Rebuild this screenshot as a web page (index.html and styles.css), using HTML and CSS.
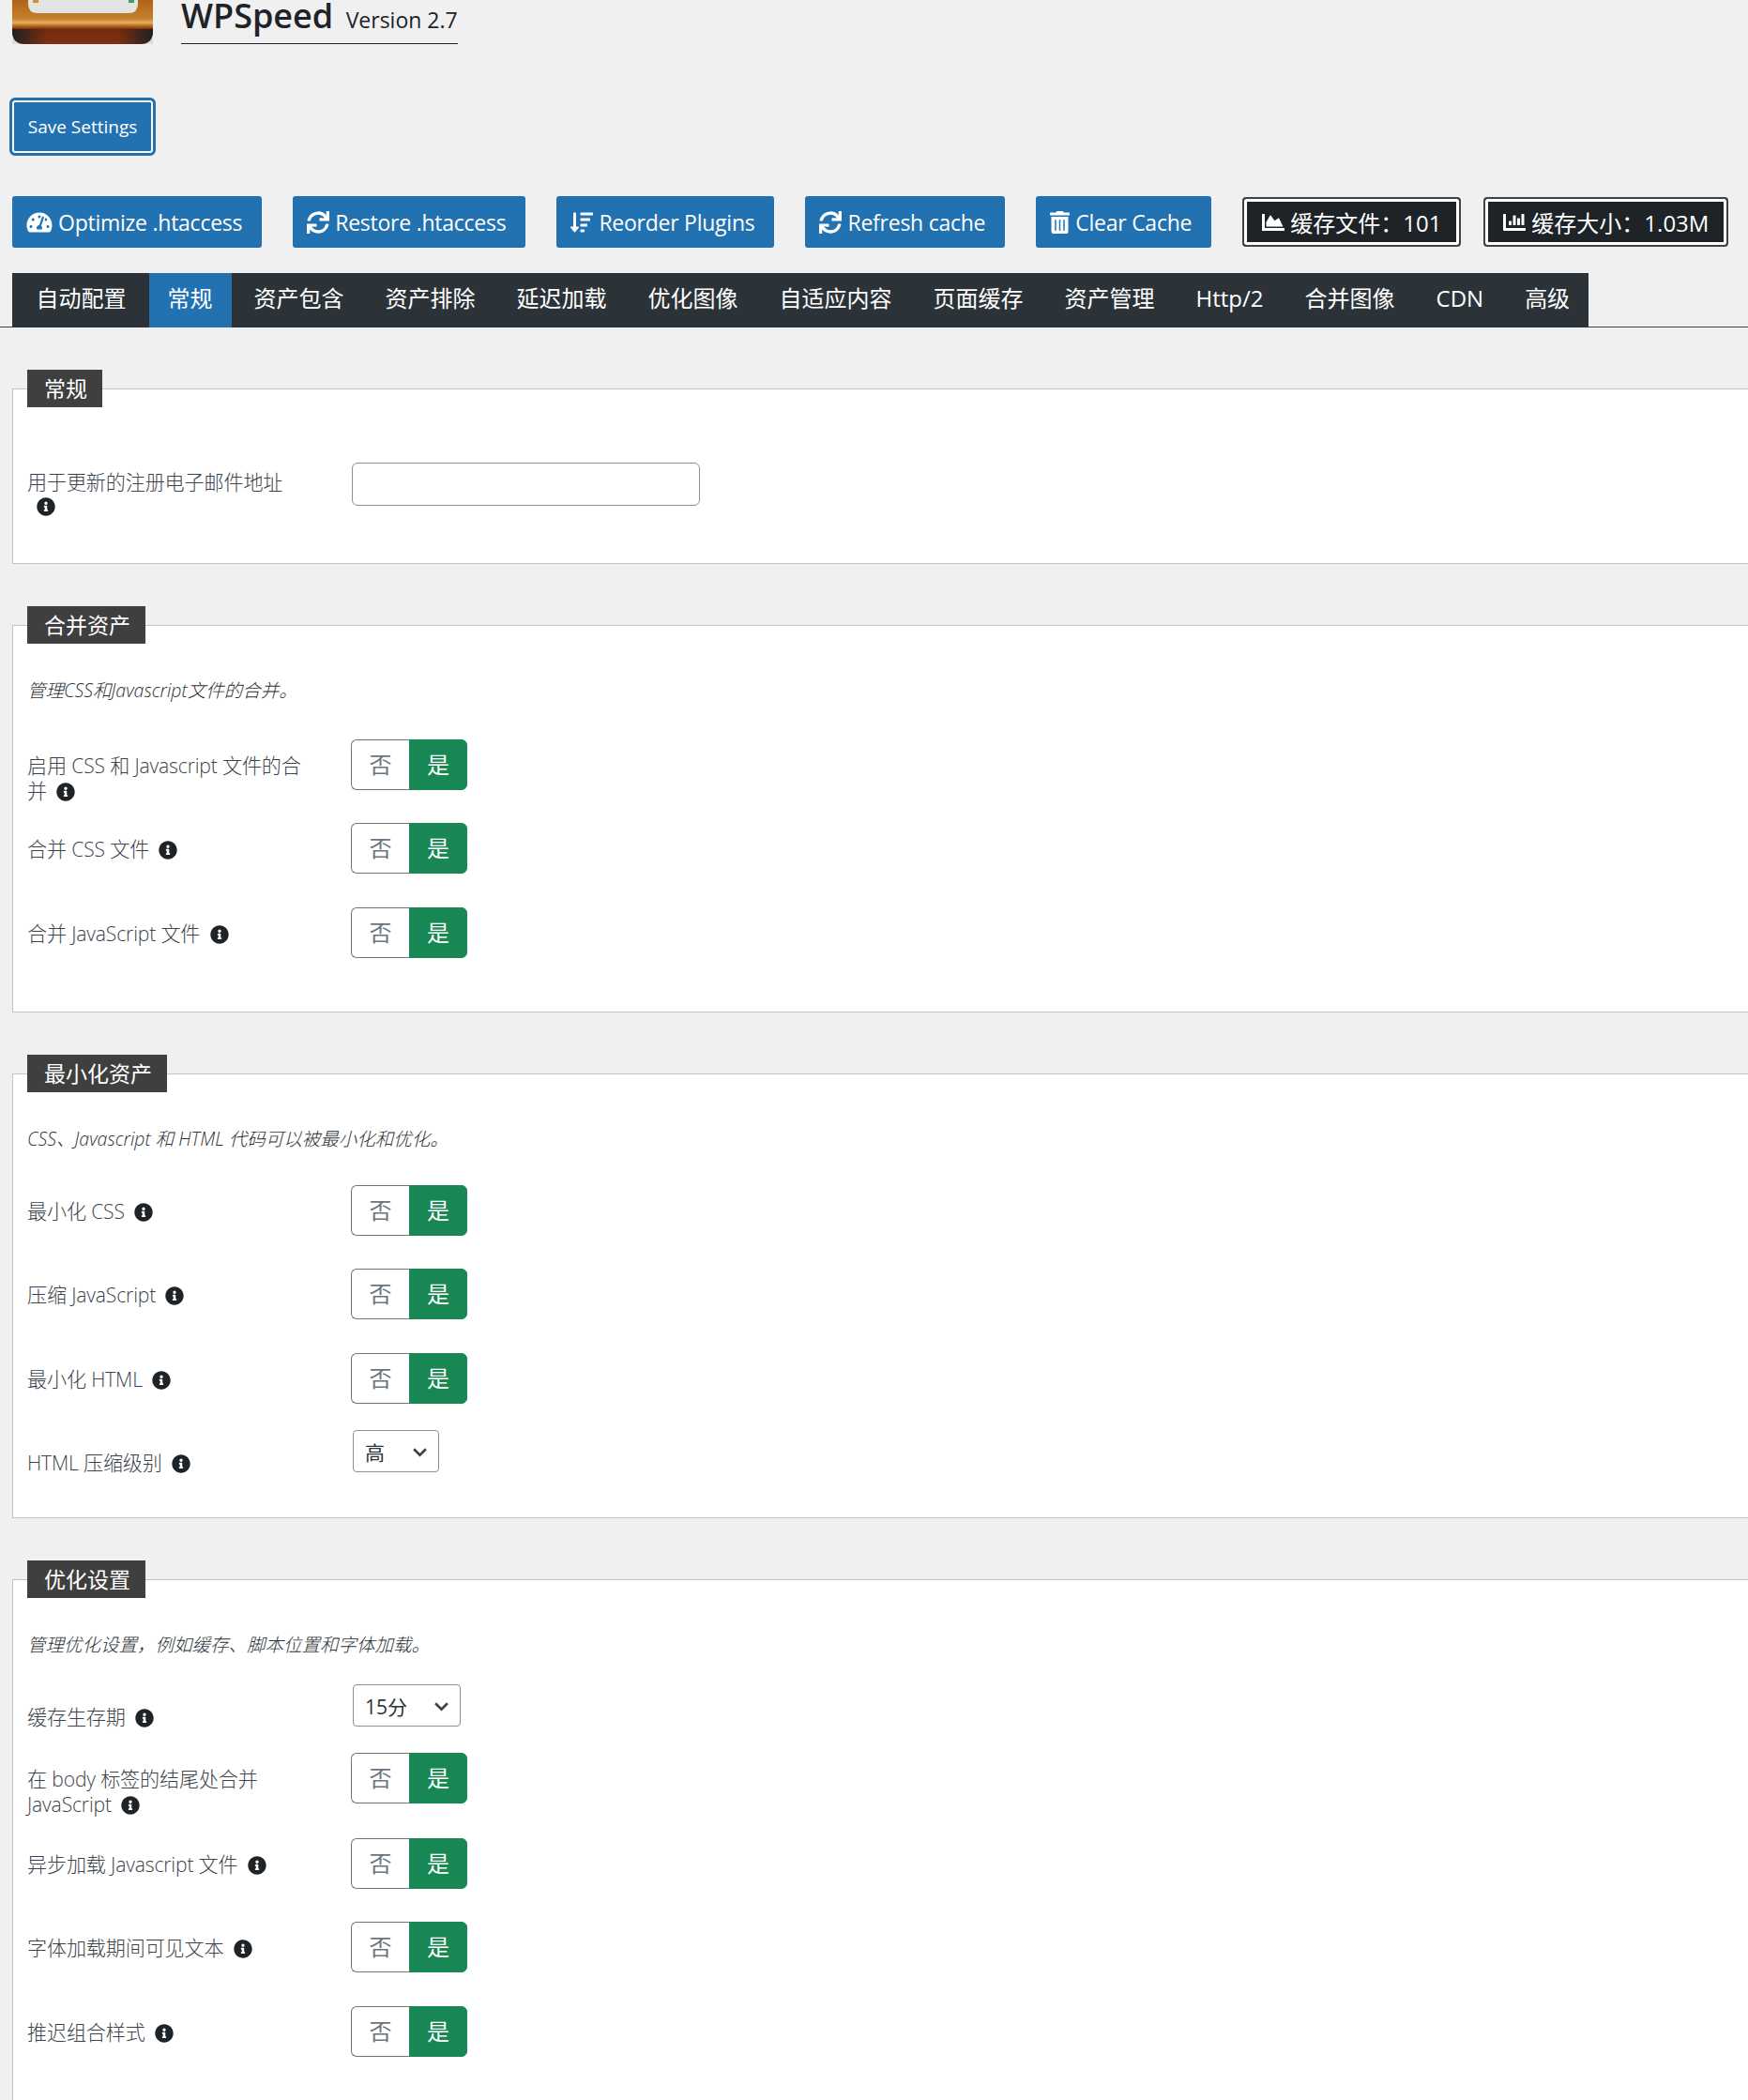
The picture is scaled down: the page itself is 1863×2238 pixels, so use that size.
FILE: index.html
```html
<!DOCTYPE html>
<html lang="zh-CN">
  <head>
    <meta charset="UTF-8" />
    <title>WPSpeed</title>
    <link rel="stylesheet" href="styles.css">
  </head>
  <body>
    <!-- Icon set -->
    <svg class="icon-defs" xmlns="http://www.w3.org/2000/svg">
      <symbol id="i-gauge" viewBox="0 0 576 512"><path d="M288 32C128.94 32 0 160.94 0 320c0 52.8 14.25 102.26 39.06 144.8 5.61 9.62 16.3 15.2 27.44 15.2h443c11.14 0 21.83-5.58 27.44-15.2C561.75 422.26 576 372.8 576 320c0-159.06-128.94-288-288-288zm0 64c14.71 0 26.58 10.13 30.32 23.65-1.11 2.26-2.64 4.23-3.45 6.67l-9.22 27.67c-5.13 3.49-10.97 6.01-17.64 6.01-17.67 0-32-14.33-32-32S270.33 96 288 96zM96 384c-17.67 0-32-14.33-32-32s14.33-32 32-32 32 14.33 32 32-14.33 32-32 32zm48-160c-17.67 0-32-14.33-32-32s14.33-32 32-32 32 14.33 32 32-14.33 32-32 32zm246.77-72.41l-61.33 184C343.13 347.33 352 364.54 352 384c0 11.72-3.38 22.55-8.88 32H232.88c-5.5-9.45-8.88-20.28-8.88-32 0-33.94 26.5-61.43 59.9-63.59l61.34-184.01c4.17-12.56 17.73-19.45 30.36-15.17 12.57 4.19 19.35 17.79 15.17 30.36zm14.66 57.2l15.52-46.55c3.47-1.29 7.13-2.23 11.05-2.23 17.67 0 32 14.33 32 32s-14.33 32-32 32c-11.38-.01-20.89-6.28-26.57-15.22zM480 384c-17.67 0-32-14.33-32-32s14.33-32 32-32 32 14.33 32 32-14.33 32-32 32z"/></symbol>
      <symbol id="i-sync" viewBox="0 0 512 512"><path d="M440.65 12.57l4 82.77A247.16 247.16 0 0 0 255.83 8C134.73 8 33.91 94.92 12.29 209.82A12 12 0 0 0 24.09 224h49.05a12 12 0 0 0 11.67-9.26 175.91 175.91 0 0 1 317-56.94l-101.46-4.86a12 12 0 0 0-12.57 12v47.41a12 12 0 0 0 12 12H500a12 12 0 0 0 12-12V12a12 12 0 0 0-12-12h-47.37a12 12 0 0 0-11.98 12.57zM255.83 432a175.61 175.61 0 0 1-146-77.8l101.8 4.87a12 12 0 0 0 12.57-12v-47.4a12 12 0 0 0-12-12H12a12 12 0 0 0-12 12V500a12 12 0 0 0 12 12h47.35a12 12 0 0 0 12-12.6l-4.15-82.57A247.17 247.17 0 0 0 255.83 504c121.11 0 221.93-86.92 243.55-201.82a12 12 0 0 0-11.8-14.18h-49.05a12 12 0 0 0-11.67 9.26A175.86 175.86 0 0 1 255.83 432z"/></symbol>
      <symbol id="i-sort" viewBox="0 0 512 512"><path d="M304 416h-64a16 16 0 0 0-16 16v32a16 16 0 0 0 16 16h64a16 16 0 0 0 16-16v-32a16 16 0 0 0-16-16zm-128-64h-48V48a16 16 0 0 0-16-16H80a16 16 0 0 0-16 16v304H16c-14.19 0-21.37 17.24-11.29 27.31l80 96a16 16 0 0 0 22.62 0l80-96C197.35 369.26 190.22 352 176 352zm256-192H240a16 16 0 0 0-16 16v32a16 16 0 0 0 16 16h192a16 16 0 0 0 16-16v-32a16 16 0 0 0-16-16zm-64 128H240a16 16 0 0 0-16 16v32a16 16 0 0 0 16 16h128a16 16 0 0 0 16-16v-32a16 16 0 0 0-16-16zM496 32H240a16 16 0 0 0-16 16v32a16 16 0 0 0 16 16h256a16 16 0 0 0 16-16V48a16 16 0 0 0-16-16z"/></symbol>
      <symbol id="i-trash" viewBox="0 0 448 512"><path d="M32 464a48 48 0 0 0 48 48h288a48 48 0 0 0 48-48V128H32zm272-256a16 16 0 0 1 32 0v224a16 16 0 0 1-32 0zm-96 0a16 16 0 0 1 32 0v224a16 16 0 0 1-32 0zm-96 0a16 16 0 0 1 32 0v224a16 16 0 0 1-32 0zM432 32H312l-9.4-18.7A24 24 0 0 0 281.1 0H166.8a23.72 23.72 0 0 0-21.4 13.3L136 32H16A16 16 0 0 0 0 48v32a16 16 0 0 0 16 16h416a16 16 0 0 0 16-16V48a16 16 0 0 0-16-16z"/></symbol>
      <symbol id="i-area" viewBox="0 0 512 512"><path d="M500 384c6.6 0 12 5.4 12 12v40c0 6.6-5.4 12-12 12H12c-6.6 0-12-5.4-12-12V76c0-6.6 5.4-12 12-12h40c6.6 0 12 5.4 12 12v308h436zM372.7 159.5L288 216l-85.3-113.7c-5.1-6.8-15.5-6.3-19.9 1L96 248v104h384l-89.9-187.8c-3.2-6.5-11.4-8.7-17.4-4.7z"/></symbol>
      <symbol id="i-bar" viewBox="0 0 512 512"><path d="M332.8 320h38.4c6.4 0 12.8-6.4 12.8-12.8V172.8c0-6.4-6.4-12.8-12.8-12.8h-38.4c-6.4 0-12.8 6.4-12.8 12.8v134.4c0 6.4 6.4 12.8 12.8 12.8zm96 0h38.4c6.4 0 12.8-6.4 12.8-12.8V76.8c0-6.4-6.4-12.8-12.8-12.8h-38.4c-6.4 0-12.8 6.4-12.8 12.8v230.4c0 6.4 6.4 12.8 12.8 12.8zm-288 0h38.4c6.4 0 12.8-6.4 12.8-12.8v-70.4c0-6.4-6.4-12.8-12.8-12.8h-38.4c-6.4 0-12.8 6.4-12.8 12.8v70.4c0 6.4 6.4 12.8 12.8 12.8zm96 0h38.4c6.4 0 12.8-6.4 12.8-12.8V108.8c0-6.4-6.4-12.8-12.8-12.8h-38.4c-6.4 0-12.8 6.4-12.8 12.8v198.4c0 6.4 6.4 12.8 12.8 12.8zM496 384H64V80c0-8.84-7.16-16-16-16H16C7.16 64 0 71.16 0 80v336c0 17.67 14.33 32 32 32h464c8.84 0 16-7.16 16-16v-32c0-8.84-7.16-16-16-16z"/></symbol>
      <symbol id="i-info" viewBox="0 0 512 512"><path d="M256 8C119.043 8 8 119.083 8 256c0 136.997 111.043 248 248 248s248-111.003 248-248C504 119.083 392.957 8 256 8zm0 110c23.196 0 42 18.804 42 42s-18.804 42-42 42-42-18.804-42-42 18.804-42 42-42zm56 254c0 6.627-5.373 12-12 12h-88c-6.627 0-12-5.373-12-12v-24c0-6.627 5.373-12 12-12h12v-64h-12c-6.627 0-12-5.373-12-12v-24c0-6.627 5.373-12 12-12h64c6.627 0 12 5.373 12 12v100h12c6.627 0 12 5.373 12 12v24z"/></symbol>
    </svg>

    <!-- Header -->
    <div class="header">
      <svg class="logo" viewBox="0 0 150 47" xmlns="http://www.w3.org/2000/svg">
        <defs>
          <linearGradient id="wood" x1="0" y1="0" x2="0" y2="1">
            <stop offset="0" stop-color="#9a5518" />
            <stop offset="0.32" stop-color="#b9701f" />
            <stop offset="0.52" stop-color="#c4802e" />
            <stop offset="0.6" stop-color="#e8ad5e" />
            <stop offset="0.66" stop-color="#b4691f" />
            <stop offset="0.72" stop-color="#7c2c0c" />
            <stop offset="1" stop-color="#8a3410" />
          </linearGradient>
          <linearGradient id="shade" x1="0" y1="0" x2="1" y2="0">
            <stop offset="0" stop-color="#1f2024" />
            <stop offset="0.25" stop-color="#1f2024" stop-opacity="0.1" />
            <stop offset="0.75" stop-color="#1f2024" stop-opacity="0.1" />
            <stop offset="1" stop-color="#1f2024" />
          </linearGradient>
        </defs>
        <rect x="0" y="0" width="150" height="47" fill="#dcdcdc" />
        <path d="M0 -10H150V33Q150 47 136 47H14Q0 47 0 33Z" fill="url(#wood)" />
        <path d="M0 31H150V33Q150 47 136 47H14Q0 47 0 33Z" fill="url(#shade)" />
        <path d="M17 -10H134V4Q134 14 124 14H27Q17 14 17 4Z" fill="#e3e5e3" />
        <rect x="22" y="0" width="6" height="3" fill="#d98a3a" />
        <rect x="124" y="0" width="6" height="3" fill="#3f9a78" />
      </svg>
      <h1 class="title">WPSpeed <small>Version 2.7</small></h1>
    </div>

    <div class="save-row">
      <button class="save-btn" type="button">Save Settings</button>
    </div>

    <!-- Action buttons -->
    <div class="actions">
      <a class="btn"><svg class="ico ico-wide"><use href="#i-gauge" /></svg>Optimize .htaccess</a>
      <a class="btn"><svg class="ico"><use href="#i-sync" /></svg>Restore .htaccess</a>
      <a class="btn"><svg class="ico"><use href="#i-sort" /></svg>Reorder Plugins</a>
      <a class="btn"><svg class="ico"><use href="#i-sync" /></svg>Refresh cache</a>
      <a class="btn"><svg class="ico ico-narrow"><use href="#i-trash" /></svg>Clear Cache</a>
      <span class="stat"><svg class="ico"><use href="#i-area" /></svg>缓存文件：101</span>
      <span class="stat stat-last"><svg class="ico"><use href="#i-bar" /></svg>缓存大小：1.03M</span>
    </div>

    <!-- Tabs -->
    <div class="tab-line">
      <ul class="tabs">
        <li class="tab">自动配置</li>
        <li class="tab active">常规</li>
        <li class="tab">资产包含</li>
        <li class="tab">资产排除</li>
        <li class="tab">延迟加载</li>
        <li class="tab">优化图像</li>
        <li class="tab">自适应内容</li>
        <li class="tab">页面缓存</li>
        <li class="tab">资产管理</li>
        <li class="tab">Http/2</li>
        <li class="tab">合并图像</li>
        <li class="tab">CDN</li>
        <li class="tab">高级</li>
      </ul>
    </div>

    <!-- General -->
    <fieldset class="panel panel-general">
      <legend>常规</legend>
      <div class="row row-input">
        <label class="row-label">用于更新的注册电子邮件地址 <svg class="info info-break"><use href="#i-info" /></svg></label>
        <input class="text-input" type="text" />
      </div>
    </fieldset>

    <!-- Combine -->
    <fieldset class="panel panel-combine">
      <legend>合并资产</legend>
      <p class="desc">管理CSS和Javascript文件的合并。</p>
      <div class="row">
        <label class="row-label">启用 CSS 和 Javascript 文件的合并 <svg class="info"><use href="#i-info" /></svg></label>
        <div class="toggle"><span class="off">否</span><span class="on">是</span></div>
      </div>
      <div class="row">
        <label class="row-label">合并 CSS 文件 <svg class="info"><use href="#i-info" /></svg></label>
        <div class="toggle"><span class="off">否</span><span class="on">是</span></div>
      </div>
      <div class="row">
        <label class="row-label">合并 JavaScript 文件 <svg class="info"><use href="#i-info" /></svg></label>
        <div class="toggle"><span class="off">否</span><span class="on">是</span></div>
      </div>
    </fieldset>

    <!-- Minify -->
    <fieldset class="panel panel-minify">
      <legend>最小化资产</legend>
      <p class="desc">CSS、Javascript 和 HTML 代码可以被最小化和优化。</p>
      <div class="row">
        <label class="row-label">最小化 CSS <svg class="info"><use href="#i-info" /></svg></label>
        <div class="toggle"><span class="off">否</span><span class="on">是</span></div>
      </div>
      <div class="row">
        <label class="row-label">压缩 JavaScript <svg class="info"><use href="#i-info" /></svg></label>
        <div class="toggle"><span class="off">否</span><span class="on">是</span></div>
      </div>
      <div class="row">
        <label class="row-label">最小化 HTML <svg class="info"><use href="#i-info" /></svg></label>
        <div class="toggle"><span class="off">否</span><span class="on">是</span></div>
      </div>
      <div class="row row-select">
        <label class="row-label">HTML 压缩级别 <svg class="info"><use href="#i-info" /></svg></label>
        <div class="select select-short">高<svg class="chev" viewBox="0 0 16 16"><path d="M2 5l6 6 6-6" /></svg></div>
      </div>
    </fieldset>

    <!-- Optimize -->
    <fieldset class="panel panel-optimize">
      <legend>优化设置</legend>
      <p class="desc">管理优化设置，例如缓存、脚本位置和字体加载。</p>
      <div class="row row-select">
        <label class="row-label">缓存生存期 <svg class="info"><use href="#i-info" /></svg></label>
        <div class="select select-long">15分<svg class="chev" viewBox="0 0 16 16"><path d="M2 5l6 6 6-6" /></svg></div>
      </div>
      <div class="row row-after-select">
        <label class="row-label">在 body 标签的结尾处合并 JavaScript <svg class="info"><use href="#i-info" /></svg></label>
        <div class="toggle"><span class="off">否</span><span class="on">是</span></div>
      </div>
      <div class="row">
        <label class="row-label">异步加载 Javascript 文件 <svg class="info"><use href="#i-info" /></svg></label>
        <div class="toggle"><span class="off">否</span><span class="on">是</span></div>
      </div>
      <div class="row">
        <label class="row-label">字体加载期间可见文本 <svg class="info"><use href="#i-info" /></svg></label>
        <div class="toggle"><span class="off">否</span><span class="on">是</span></div>
      </div>
      <div class="row">
        <label class="row-label">推迟组合样式 <svg class="info"><use href="#i-info" /></svg></label>
        <div class="toggle"><span class="off">否</span><span class="on">是</span></div>
      </div>
    </fieldset>
  </body>
</html>
```

FILE: styles.css
```css
* {
  margin: 0;
  padding: 0;
  box-sizing: border-box;
}

html {
  height: 100%;
  overflow: hidden;
}

body {
  height: 2238px;
  overflow: hidden;
  font-family: "Open Sans", "Noto Sans CJK SC", sans-serif;
  background-color: #f0f0f1;
  color: #3c434a;
}

.icon-defs {
  display: none;
}

/* Header */
.header {
  display: flex;
  height: 47px;
  padding-left: 13px;
}

.logo {
  width: 150px;
  height: 47px;
  flex: none;
}

.title {
  margin-left: 30px;
  width: 295px;
  height: 47px;
  border-bottom: 1px solid #1d2327;
  color: #1d2327;
  font-size: 36px;
  font-weight: 600;
  line-height: 34px;
  white-space: nowrap;
}

.title small {
  margin-left: 4px;
  font-size: 23px;
  font-weight: 400;
}

.save-row {
  display: flex;
  padding: 57px 0 0 10px;
}

.save-btn {
  width: 156px;
  height: 62px;
  border: 3px solid #2271b1;
  border-radius: 6px;
  background-color: #2271b1;
  box-shadow: inset 0 0 0 2px #fff;
  color: #fff;
  font: 400 19px "Open Sans", sans-serif;
}

/* Action buttons */
.actions {
  display: flex;
  align-items: flex-start;
  gap: 33px;
  padding: 43px 0 0 13px;
}

.btn {
  display: flex;
  align-items: center;
  height: 55px;
  padding: 0 21px 0 15px;
  border-radius: 3px;
  background-color: #2271b1;
  color: #fff;
  font-size: 23px;
  letter-spacing: -0.25px;
  white-space: nowrap;
}

.ico {
  width: 24px;
  height: 24px;
  margin-right: 6px;
  fill: currentColor;
  flex: none;
}

.ico-wide {
  width: 28px;
}

.ico-narrow {
  width: 21px;
}

.stat {
  display: flex;
  align-items: center;
  height: 53px;
  margin-top: 1px;
  padding: 0 19px;
  border: 2px solid #3c434a;
  border-radius: 4px;
  background-color: #1d2327;
  box-shadow: inset 0 0 0 3px #fff;
  color: #fff;
  font-size: 24px;
  white-space: nowrap;
}

.stat-last {
  margin-left: -9px;
}

/* Tabs */
.tab-line {
  margin-top: 27px;
  border-bottom: 1px solid #3c434a;
}

.tabs {
  display: flex;
  gap: 4px;
  width: max-content;
  height: 58px;
  margin: 0 0 -1px 13px;
  padding-left: 5.5px;
  list-style: none;
  background-color: #2c3338;
}

.tab {
  padding: 0 20px;
  color: #fff;
  font-size: 24px;
  line-height: 54px;
  white-space: nowrap;
}

.tab.active {
  background-color: #2271b1;
}

/* Panels */
.panel {
  width: 1900px;
  margin-top: 45px;
  margin-left: 13px;
  padding: 0 15px;
  border: 1px solid #c3c4c7;
  background-color: #fff;
}

.panel legend {
  height: 40px;
  padding: 0 16px 0 18px;
  background-color: #3f3f3f;
  color: #fff;
  font-size: 23px;
  line-height: 40px;
}

.panel-general {
  height: 207px;
}

.panel-combine {
  height: 433px;
}

.panel-minify {
  height: 494px;
}

.panel-optimize {
  height: 720px;
}

.desc {
  margin-top: 36px;
  margin-bottom: 19px;
  color: #2c3338;
  font-size: 19.5px;
  font-style: italic;
  font-weight: 300;
  line-height: 27px;
}

.panel-combine .desc {
  margin-bottom: 22px;
}

.row {
  display: flex;
  align-items: flex-start;
  height: 89.4px;
  padding-top: 17px;
}

.row-label {
  flex: none;
  width: 346px;
  padding: 14px 46px 0 0;
  color: #3c434a;
  font-size: 21.1px;
  font-weight: 300;
  letter-spacing: -0.15px;
  line-height: 27px;
}

.row-input {
  height: auto;
  padding-top: 59px;
}

.row-input .row-label {
  padding-top: 7px;
}

.row-select {
  height: 58px;
  padding-top: 10px;
}

.row-select .row-label {
  padding-top: 21px;
}

.row-after-select {
  height: 99px;
  padding-top: 25px;
}

.info {
  display: inline-block;
  width: 20px;
  height: 20px;
  margin-left: 5px;
  vertical-align: -3px;
  fill: #1d2327;
}

.info-break {
  display: block;
  margin: 3px 0 0 10px;
}

.text-input {
  width: 371px;
  height: 46px;
  border: 1px solid #8c8f94;
  border-radius: 6px;
  background-color: #fff;
}

.toggle {
  display: flex;
  width: 124px;
  height: 54px;
  margin-left: -1px;
  font-size: 24px;
  line-height: 52px;
  text-align: center;
}

.toggle span {
  width: 62px;
}

.off {
  border: 1px solid #6c757d;
  border-right: none;
  border-radius: 6px 0 0 6px;
  color: #6c757d;
}

.on {
  border: 1px solid #198754;
  border-radius: 0 6px 6px 0;
  background-color: #198754;
  color: #fff;
}

.select {
  display: flex;
  align-items: center;
  justify-content: space-between;
  height: 45px;
  margin-left: 1px;
  padding: 0 11px 0 12px;
  border: 1px solid #8c8f94;
  border-radius: 4px;
  background-color: #fff;
  color: #2c3338;
  font-size: 21px;
}

.select-short {
  width: 92px;
}

.select-long {
  width: 115px;
}

.chev {
  width: 17px;
  height: 17px;
  margin-top: 2px;
  fill: none;
  stroke: #3c434a;
  stroke-width: 2.5;
}
```
